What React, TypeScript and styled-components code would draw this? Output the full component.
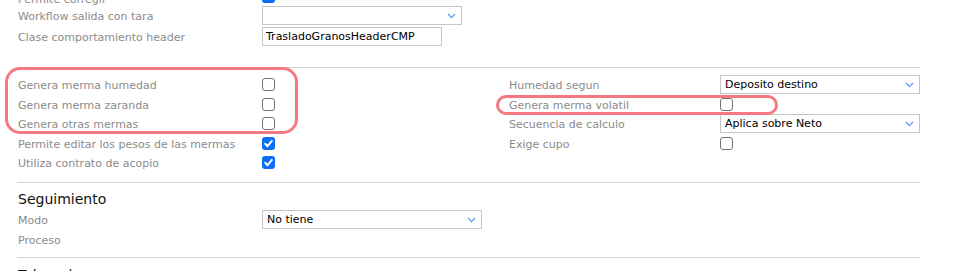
import React, { FC } from 'react'
import styled, { createGlobalStyle } from 'styled-components'

const GlobalStyle = createGlobalStyle`
  html, body {
    margin: 0;
    padding: 0;
    background: #fff;
    overflow: hidden;
  }
  body {
    font-family: 'DejaVu Sans', Verdana, sans-serif;
    font-size: 11px;
  }
`

const PAGE = styled.div`
  width: 903px;
  padding-left: 17px;
`

const TOP_SECTION = styled.div`
  margin-top: -13px;
  padding-bottom: 19px;
`

const SECTION = styled.section<{ $padTop: number; $padBottom: number }>`
  position: relative;
  border-top: 1px solid #d4d4d4;
  padding: ${({ $padTop }) => $padTop}px 0 ${({ $padBottom }) => $padBottom}px;
`

const FIELD_GRID = styled.div<{ $cols: string; $rows: string }>`
  display: grid;
  grid-template-columns: ${({ $cols }) => $cols};
  grid-auto-rows: ${({ $rows }) => $rows};
  align-items: center;
`

const TOP_GRID = styled.div`
  display: grid;
  grid-template-columns: 245px 1fr;
  grid-template-rows: 19px 21px 21px;
  align-items: start;
`

const LABEL = styled.div`
  color: #8b8b8b;
  white-space: nowrap;
  padding: 2px 0 0 1px;
  align-self: center;
`

const TOP_LABEL = styled(LABEL)<{ $drop?: number }>`
  align-self: start;
  line-height: 19px;
  padding-top: ${({ $drop }) => $drop ?? 1}px;
`

const SECTION_TITLE = styled.h3`
  margin: 0;
  font-size: 14px;
  font-weight: normal;
  line-height: 21px;
  color: #111;
  padding-left: 1px;
`

const BOX = styled.span<{ $checked?: boolean }>`
  display: flex;
  align-items: center;
  justify-content: center;
  width: 13px;
  height: 13px;
  box-sizing: border-box;
  border-radius: 3px;
  border: ${({ $checked }) => ($checked ? 'none' : '1px solid #737373')};
  background: ${({ $checked }) => ($checked ? '#0b6ef4' : '#fff')};
  align-self: center;
`

const SELECT_BOX = styled.div<{ $width: number }>`
  display: flex;
  align-items: center;
  justify-content: space-between;
  width: ${({ $width }) => $width}px;
  height: 19px;
  box-sizing: border-box;
  border: 1px solid #c6c6c6;
  padding: 0 5px 0 4px;
  color: #000;
  background: #fff;
`

const TEXT_INPUT = styled.div`
  width: 180px;
  height: 19px;
  box-sizing: border-box;
  border: 1px solid #c6c6c6;
  padding: 0 3px;
  line-height: 17px;
  color: #000;
`

const HIGHLIGHT = styled.div<{ $top: number; $left: number; $w: number; $h: number; $r: number }>`
  position: absolute;
  top: ${({ $top }) => $top}px;
  left: ${({ $left }) => $left}px;
  width: ${({ $w }) => $w}px;
  height: ${({ $h }) => $h}px;
  box-sizing: border-box;
  border: 3px solid #f47980;
  border-radius: ${({ $r }) => $r}px;
  pointer-events: none;
`

const Checkbox: FC<{ checked?: boolean }> = ({ checked }) => (
  <BOX $checked={checked}>
    {checked && (
      <svg width="13" height="13" viewBox="0 0 13 13">
        <polyline
          points="3.2,6.8 5.5,9.2 9.9,3.9"
          fill="none"
          stroke="#fff"
          strokeWidth="2"
          strokeLinecap="round"
          strokeLinejoin="round"
        />
      </svg>
    )}
  </BOX>
)

const Select: FC<{ value?: string; width: number }> = ({ value, width }) => (
  <SELECT_BOX $width={width}>
    <span>{value}</span>
    <svg width="9" height="6" viewBox="0 0 9 6">
      <polyline points="1,1 4.5,4.6 8,1" fill="none" stroke="#5b9cf0" strokeWidth="1.3" />
    </svg>
  </SELECT_BOX>
)

const mermasRows: { label: string; control: React.ReactNode; rightLabel?: string; right?: React.ReactNode }[] = [
  { label: 'Genera merma humedad', control: <Checkbox />, rightLabel: 'Humedad segun', right: <Select value="Deposito destino" width={200} /> },
  { label: 'Genera merma zaranda', control: <Checkbox />, rightLabel: 'Genera merma volatil', right: <Checkbox /> },
  { label: 'Genera otras mermas', control: <Checkbox />, rightLabel: 'Secuencia de calculo', right: <Select value="Aplica sobre Neto" width={200} /> },
  { label: 'Permite editar los pesos de las mermas', control: <Checkbox checked />, rightLabel: 'Exige cupo', right: <Checkbox /> },
  { label: 'Utiliza contrato de acopio', control: <Checkbox checked /> }
]

const App: FC = () => {
  return (
    <PAGE>
      <GlobalStyle />
      <TOP_SECTION>
        <TOP_GRID>
          <TOP_LABEL $drop={3}>Permite corregir</TOP_LABEL>
          <Checkbox checked />
          <TOP_LABEL>Workflow salida con tara</TOP_LABEL>
          <Select width={200} />
          <TOP_LABEL>Clase comportamiento header</TOP_LABEL>
          <TEXT_INPUT>TrasladoGranosHeaderCMP</TEXT_INPUT>
        </TOP_GRID>
      </TOP_SECTION>

      <SECTION $padTop={7} $padBottom={9}>
        <FIELD_GRID $cols="245px 246px 212px 200px" $rows="19.5px">
          {mermasRows.map((row) => (
            <React.Fragment key={row.label}>
              <LABEL>{row.label}</LABEL>
              {row.control}
              <LABEL>{row.rightLabel}</LABEL>
              <div>{row.right}</div>
            </React.Fragment>
          ))}
        </FIELD_GRID>
        <HIGHLIGHT $top={-1} $left={-12} $w={293} $h={67} $r={15} />
        <HIGHLIGHT $top={27} $left={479} $w={282} $h={20} $r={10} />
      </SECTION>

      <SECTION $padTop={6} $padBottom={7}>
        <SECTION_TITLE>Seguimiento</SECTION_TITLE>
        <FIELD_GRID $cols="245px 1fr" $rows="20px">
          <LABEL>Modo</LABEL>
          <Select value="No tiene" width={220} />
          <LABEL>Proceso</LABEL>
          <div />
        </FIELD_GRID>
      </SECTION>

      <SECTION $padTop={7} $padBottom={0}>
        <SECTION_TITLE>Talonarios</SECTION_TITLE>
      </SECTION>
    </PAGE>
  )
}

export default App
